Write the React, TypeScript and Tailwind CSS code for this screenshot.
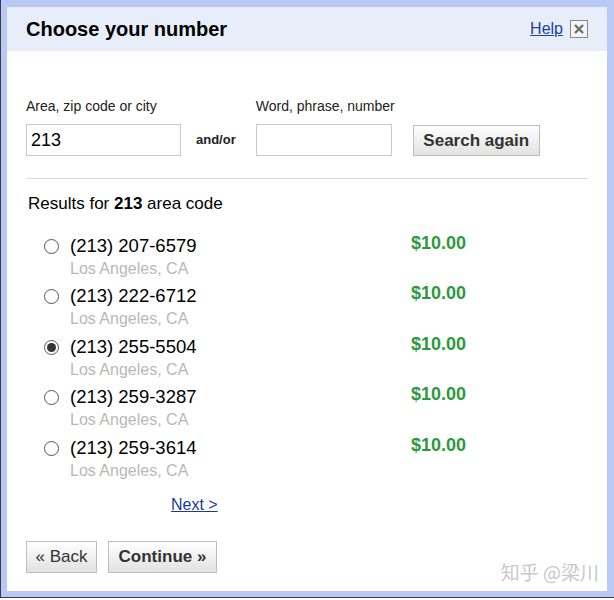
import React from 'react'

const rows = [
    { number: '(213) 207-6579', checked: false },
    { number: '(213) 222-6712', checked: false },
    { number: '(213) 255-5504', checked: true },
    { number: '(213) 259-3287', checked: false },
    { number: '(213) 259-3614', checked: false },
]

function Radio({ checked }: { checked: boolean }) {
    return (
        <span className="flex h-[15px] w-[15px] items-center justify-center rounded-full border border-[#555] bg-white">
            {checked && <span className="h-[9px] w-[9px] rounded-full bg-[#333]" />}
        </span>
    )
}

export default function App() {
    return (
        <div className="h-[600px] w-[614px] bg-white font-['Liberation_Sans',Arial,sans-serif]">
            <div className="flex h-[598px] flex-col border-b border-l border-[#3a3a4a] bg-[#b9c8f5] pb-[6px] pl-[6px] pr-[7px] pt-[7px]">
                <div className="flex flex-1 flex-col bg-white">
                    {/* header */}
                    <div className="flex h-[44px] items-center bg-[#e8eef9] pl-[19px] pr-[19px]">
                        <h1 className="flex-1 text-[20px] font-bold text-black">Choose your number</h1>
                        <a href="#" className="mr-[7px] text-[16px] text-[#2040a0] underline">Help</a>
                        <span className="flex h-[18px] w-[18px] items-center justify-center border border-[#8a8a8a] bg-[#f4f4f4]">
                            <svg width="12" height="12" viewBox="0 0 12 12">
                                <path d="M2 2L10 10M10 2L2 10" stroke="#6f6f6f" strokeWidth="2.4" />
                            </svg>
                        </span>
                    </div>

                    {/* search */}
                    <div className="flex items-end px-[19px] pt-[45px]">
                        <div className="flex flex-col">
                            <label className="mb-[7px] text-[14px] text-[#222]">Area, zip code or city</label>
                            <div className="flex h-[32px] w-[155px] items-center border border-[#c8c8c8] px-[4px] text-[18px] text-black">213</div>
                        </div>
                        <span className="ml-[15px] mr-[20px] mb-[7px] text-[13px] font-bold text-[#222]">and/or</span>
                        <div className="flex flex-col">
                            <label className="mb-[7px] text-[14px] text-[#222]">Word, phrase, number</label>
                            <div className="h-[32px] w-[136px] border border-[#c8c8c8]" />
                        </div>
                        <button className="ml-[18px] h-[31px] w-[127px] border border-[#bdbdbd] bg-gradient-to-b from-white to-[#e2e2e2] text-[17px] font-bold text-[#333]">
                            Search again
                        </button>
                    </div>

                    <div className="mx-[19px] mt-[22px] h-px bg-[#dcdcdc]" />

                    {/* results */}
                    <div className="px-[21px] pt-[12px] text-[17px] text-black">
                        Results for <b>213</b> area code
                    </div>

                    <ul className="mt-[18px] flex flex-col">
                        {rows.map((row) => (
                            <li key={row.number} className="flex h-[50.5px] pl-[37px]">
                                <div className="pt-[4px]">
                                    <Radio checked={row.checked} />
                                </div>
                                <div className="ml-[11px] flex w-[341px] flex-col">
                                    <span className="text-[18.5px] leading-[22px] text-black">{row.number}</span>
                                    <span className="text-[16px] leading-[23px] text-[#b8b8b8]">Los Angeles, CA</span>
                                </div>
                                <span className="mt-[-2px] text-[18px] font-bold leading-[20px] text-[#2a9a3d]">$10.00</span>
                            </li>
                        ))}
                    </ul>

                    <div className="pl-[164px] pt-[6px]">
                        <a href="#" className="text-[16px] text-[#1a3a9a] underline">Next &gt;</a>
                    </div>

                    {/* footer */}
                    <div className="flex items-end px-[19px] pt-[24px]">
                        <button className="h-[32px] w-[71px] border border-[#bdbdbd] bg-gradient-to-b from-white to-[#e2e2e2] text-[17px] text-[#333]">
                            « Back
                        </button>
                        <button className="ml-[11px] h-[32px] w-[109px] border border-[#bdbdbd] bg-gradient-to-b from-white to-[#e2e2e2] text-[17px] font-bold text-[#333]">
                            Continue »
                        </button>
                        <span className="ml-auto mr-[-11px] mb-[-13px] text-[19px] text-[#c8c8c8] font-['Noto_Sans_CJK_SC',sans-serif]">知乎 @梁川</span>
                    </div>
                </div>
            </div>
        </div>
    )
}
